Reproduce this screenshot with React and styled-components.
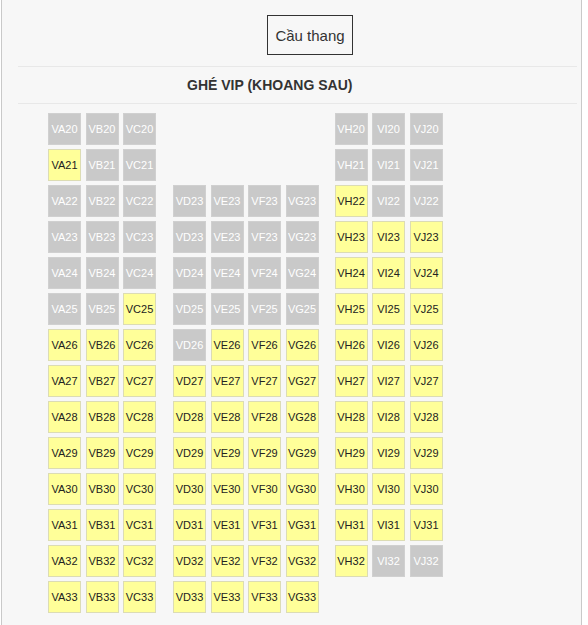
import React from "react";
import styled, { createGlobalStyle } from "styled-components";

const GlobalStyle = createGlobalStyle`
  body {
    margin: 0;
    background: #ffffff;
    font-family: "Liberation Sans", Arial, sans-serif;
  }
`;

// x = đã bán (xám), o = còn trống (vàng), "" = không có ghế
const left = ["A", "B", "C"];
const mid = ["D", "E", "F", "G"];
const right = ["H", "I", "J"];

const status = {
  20: ["xxx", "", "xxx"],
  21: ["oxx", "", "xxx"],
  22: ["xxx", "xxxx", "oxx"],
  23: ["xxx", "xxxx", "ooo"],
  24: ["xxx", "xxxx", "ooo"],
  25: ["xxo", "xxxx", "ooo"],
  26: ["ooo", "xooo", "ooo"],
  27: ["ooo", "oooo", "ooo"],
  28: ["ooo", "oooo", "ooo"],
  29: ["ooo", "oooo", "ooo"],
  30: ["ooo", "oooo", "ooo"],
  31: ["ooo", "oooo", "ooo"],
  32: ["ooo", "oooo", "oxx"],
  33: ["ooo", "oooo", ""],
};

function buildCells(row) {
  const [a, b, c] = status[row];
  // hàng 22 khoang giữa bị đánh số trùng 23
  const midRow = row === 22 ? 23 : row;
  const cells = [];
  left.forEach((l, i) => cells.push({ name: `V${l}${row}`, sold: a[i] === "x" }));
  cells.push(null);
  mid.forEach((l, i) =>
    cells.push(b ? { name: `V${l}${midRow}`, sold: b[i] === "x" } : { empty: true })
  );
  cells.push(null);
  right.forEach((l, i) =>
    cells.push(c ? { name: `V${l}${row}`, sold: c[i] === "x" } : { empty: true })
  );
  return cells;
}

function App() {
  const rows = Object.keys(status).map(Number);
  return (
    <Frame>
      <GlobalStyle />
      <Top>
        <Stairs>Cầu thang</Stairs>
      </Top>
      <Header>
        <Title>GHÉ VIP (KHOANG SAU)</Title>
      </Header>
      <SeatMap>
        {rows.map((row) =>
          buildCells(row).map((cell, i) => {
            if (cell === null) return <Aisle key={`${row}-${i}`} />;
            if (cell.empty) return <Blank key={`${row}-${i}`} />;
            return (
              <Seat key={`${row}-${i}`} $sold={cell.sold}>
                {cell.name}
              </Seat>
            );
          })
        )}
      </SeatMap>
    </Frame>
  );
}

export default App;

const Frame = styled.div`
  margin-left: 1px;
  width: 581px;
  min-height: 625px;
  box-sizing: border-box;
  border-left: 1px solid #c9c9c9;
  border-right: 1px solid #c9c9c9;
  background: #f7f7f7;
  color: #333;
`;

const Top = styled.div`
  display: flex;
  padding-top: 15px;
  padding-left: 265px;
`;

const Stairs = styled.div`
  width: 86px;
  height: 40px;
  box-sizing: border-box;
  border: 1px solid #333;
  display: flex;
  align-items: center;
  justify-content: center;
  font-size: 15px;
  color: #333;
`;

const Header = styled.div`
  margin: 11px 4px 0 16px;
  border-top: 1px solid #e8e8e8;
  border-bottom: 1px solid #e8e8e8;
  height: 36px;
`;

const Title = styled.h3`
  margin: 0;
  padding-left: 169px;
  line-height: 36px;
  font-size: 14px;
  font-weight: bold;
  color: #333;
`;

const SeatMap = styled.div`
  display: grid;
  grid-template-columns: repeat(3, 33px) 8px repeat(4, 33px) 7px repeat(3, 33px);
  grid-auto-rows: 32px;
  column-gap: 4.5px;
  row-gap: 4px;
  padding: 9px 0 12px 46px;
`;

const Aisle = styled.div``;

const Blank = styled.div``;

const Seat = styled.div`
  box-sizing: border-box;
  display: flex;
  align-items: center;
  justify-content: center;
  font-size: 11px;
  background: ${(p) => (p.$sold ? "#c9c9c9" : "#ffff99")};
  border: 1px solid ${(p) => (p.$sold ? "#d0d0d0" : "#dcdcb4")};
  color: ${(p) => (p.$sold ? "#ffffff" : "#222")};
`;
